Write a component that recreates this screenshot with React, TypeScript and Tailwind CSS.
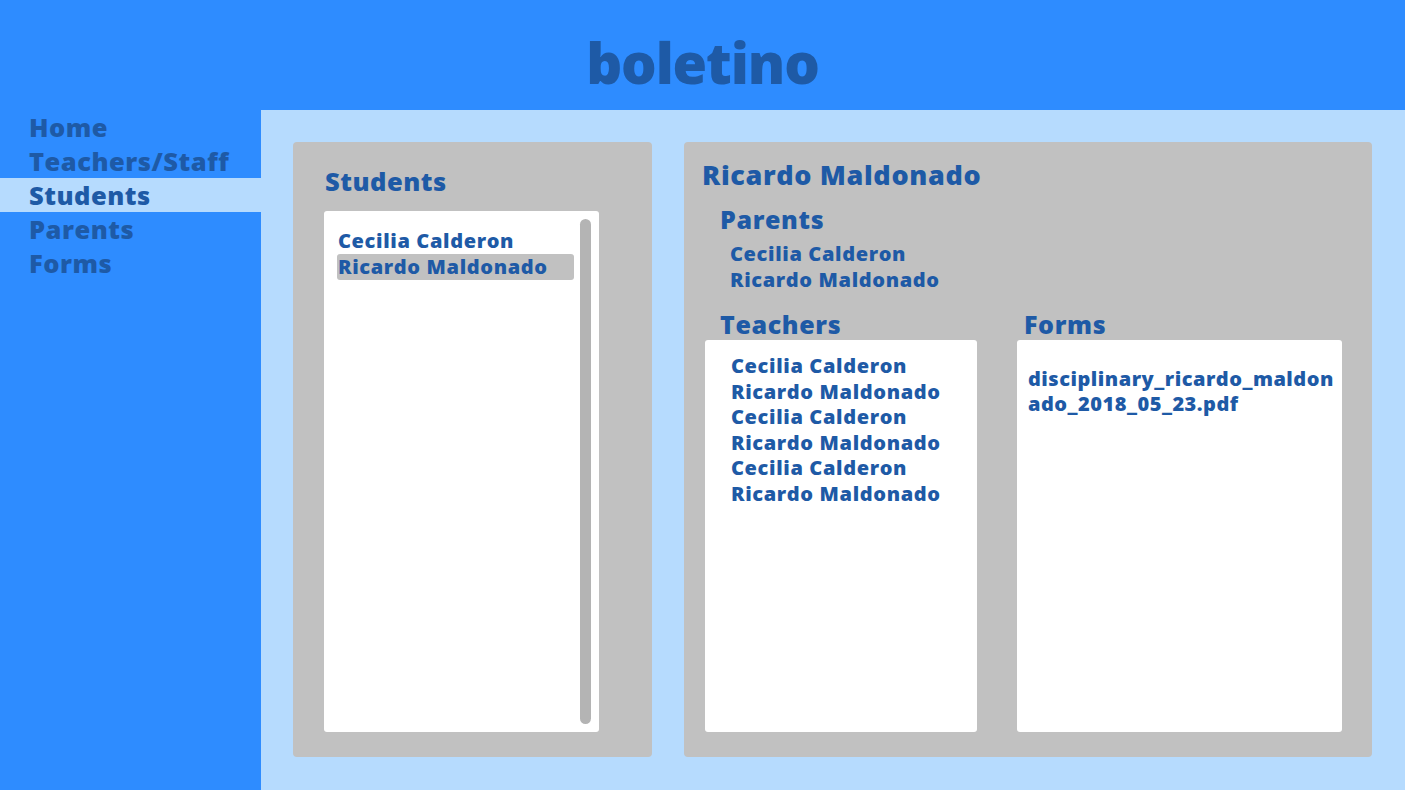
import { useState } from 'react';

// Simple school admin screen: nav on the left, student list and student detail on the right.

const navItems = ['Home', 'Teachers/Staff', 'Students', 'Parents', 'Forms'];
const students = ['Cecilia Calderon', 'Ricardo Maldonado'];
const parents = ['Cecilia Calderon', 'Ricardo Maldonado'];
const teachers = [
  'Cecilia Calderon',
  'Ricardo Maldonado',
  'Cecilia Calderon',
  'Ricardo Maldonado',
  'Cecilia Calderon',
  'Ricardo Maldonado',
];

export default function App() {
  const [active, setActive] = useState('Students');
  const [selected, setSelected] = useState('Ricardo Maldonado');

  return (
    <div className="flex h-[790px] w-full flex-col overflow-hidden font-['Open_Sans',sans-serif] font-extrabold tracking-[0.04em] text-[#1e5aa6]">
      <header className="h-[110px] shrink-0 bg-[#2e8cff] pt-[34px] text-center">
        <h1 className="text-[56px] leading-[56px] tracking-[-0.02em]">boletino</h1>
      </header>

      <div className="flex flex-1">
        {/* sidebar */}
        <nav className="w-[261px] shrink-0 bg-[#2e8cff]">
          {navItems.map((item) => (
            <div
              key={item}
              onClick={() => setActive(item)}
              className={`h-[34px] cursor-pointer pl-[29px] text-[25.5px] leading-[34px] tracking-[0.02em] ${
                active === item ? 'bg-[#b6dbfe]' : ''
              }`}
            >
              {item}
            </div>
          ))}
        </nav>

        <main className="flex flex-1 gap-[32px] bg-[#b6dbfe] pb-[33px] pl-[32px] pr-[33px] pt-[32px]">
          {/* student list */}
          <section className="flex w-[359px] shrink-0 flex-col rounded-[4px] bg-[#c1c1c1] pb-[25px] pl-[31px] pt-[24px]">
            <h2 className="pl-[1px] text-[25.5px] leading-[30px] tracking-[0.02em]">Students</h2>
            <div className="mt-[15px] flex w-[275px] flex-1 rounded-[3px] bg-white py-[8px] pl-[13px] pr-[8px]">
              <ul className="flex-1 pr-[6px] pt-[9px] text-[20px] leading-[26px]">
                {students.map((s) => (
                  <li
                    key={s}
                    onClick={() => setSelected(s)}
                    className={`cursor-pointer rounded-[3px] pl-[1px] ${
                      selected === s ? 'bg-[#c1c1c1]' : ''
                    }`}
                  >
                    {s}
                  </li>
                ))}
              </ul>
              <div className="w-[11px] rounded-full bg-[#b4b4b4]" />
            </div>
          </section>

          {/* student detail */}
          <section className="flex flex-1 flex-col rounded-[4px] bg-[#c1c1c1] pb-[25px] pl-[18px] pr-[30px] pt-[18px]">
            <h2 className="text-[27px] leading-[30px]">{selected}</h2>

            <h3 className="ml-[18px] mt-[14px] text-[25px] leading-[30px]">Parents</h3>
            <ul className="ml-[28px] mt-[7px] text-[20px] leading-[26px]">
              {parents.map((p) => (
                <li key={p}>{p}</li>
              ))}
            </ul>

            <div className="mt-[16px] flex flex-1 gap-[40px] pl-[3px]">
              <div className="flex w-[272px] flex-col">
                <h3 className="pl-[15px] text-[25px] leading-[30px]">Teachers</h3>
                <ul className="mt-[1px] flex-1 rounded-[3px] bg-white pl-[26px] pt-[13px] text-[20px] leading-[25.6px]">
                  {teachers.map((t, i) => (
                    <li key={i}>{t}</li>
                  ))}
                </ul>
              </div>
              <div className="flex flex-1 flex-col">
                <h3 className="pl-[7px] text-[25px] leading-[30px]">Forms</h3>
                <div className="mt-[1px] flex-1 rounded-[3px] bg-white pl-[11px] pt-[26px] text-[20px] leading-[25px] tracking-[0.025em]">
                  disciplinary_ricardo_maldon
                  <br />
                  ado_2018_05_23.pdf
                </div>
              </div>
            </div>
          </section>
        </main>
      </div>
    </div>
  );
}
